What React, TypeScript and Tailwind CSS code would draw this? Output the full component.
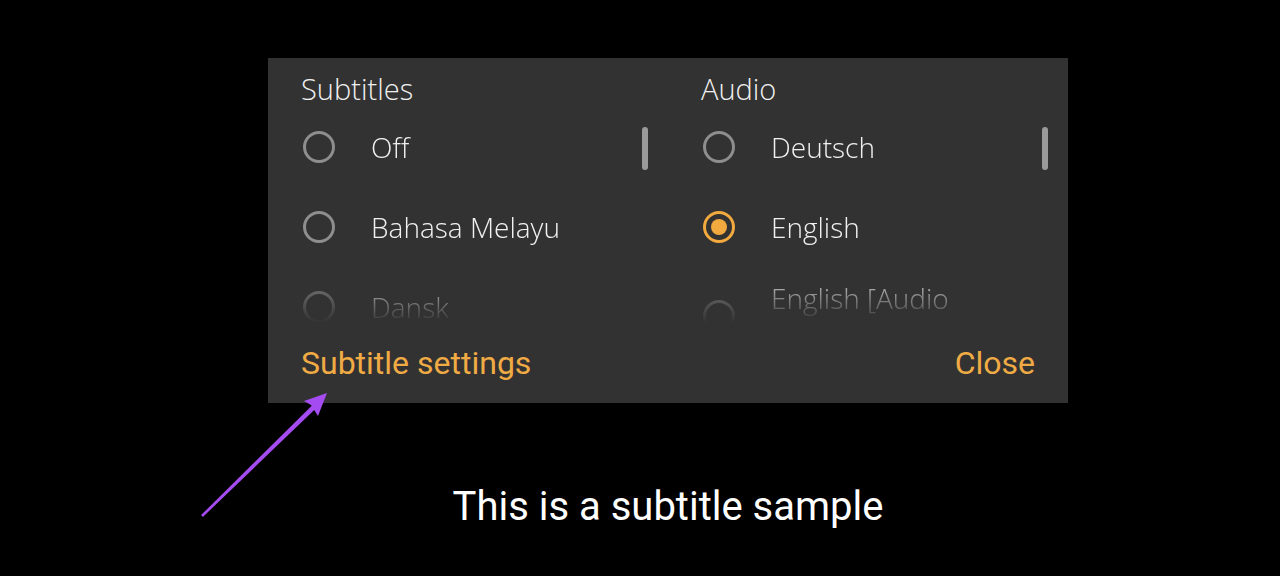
import React from 'react';

type Item = { label: string; selected?: boolean; wrap?: boolean };

const subtitles: Item[] = [{ label: 'Off' }, { label: 'Bahasa Melayu' }, { label: 'Dansk' }];
const audio: Item[] = [{ label: 'Deutsch' }, { label: 'English', selected: true }, { label: 'English [Audio Description]', wrap: true }];

const Radio: React.FC<{ selected?: boolean }> = ({ selected }) => (
    <svg width="36" height="36" viewBox="0 0 36 36" className="shrink-0">
        <circle cx="18" cy="18" r="14.5" fill="none" stroke={selected ? '#f2aa3e' : '#8e8e8e'} strokeWidth="3" />
        {selected && <circle cx="18" cy="18" r="8" fill="#f2aa3e" />}
    </svg>
);

const Column: React.FC<{ title: string; items: Item[] }> = ({ title, items }) => (
    <div className="relative w-[400px] pl-[33px] pr-[20px]">
        <div className="h-[36px] leading-[36px] text-[29px] font-light text-[#f0f0f0]">{title}</div>
        <div className="h-[216px] overflow-hidden [mask-image:linear-gradient(to_bottom,black_160px,transparent_216px)]">
            {items.map(item => (
                <div key={item.label} className={`flex items-center gap-[34px] ${item.wrap ? 'py-[13px]' : 'h-[80px]'}`}>
                    <Radio selected={item.selected} />
                    <div className="w-[280px] text-[28px] leading-[36px] font-light text-[#f0f0f0]">{item.label}</div>
                </div>
            ))}
        </div>
        <div className="absolute left-[374px] top-[56px] h-[43px] w-[6px] rounded-full bg-[#9a9a9a]" />
    </div>
);

export default function App() {
    return (
        <div className="relative w-[1280px] h-[576px] bg-black overflow-hidden" style={{ fontFamily: '"Open Sans", "Noto Sans", sans-serif' }}>
            <div className="pt-[58px] ml-[268px] w-[800px]">
                <div className="h-[345px] bg-[#323232] pt-[13px] flex flex-col">
                    <div className="flex">
                        <Column title="Subtitles" items={subtitles} />
                        <Column title="Audio" items={audio} />
                    </div>
                    <div className="flex-1 flex items-center justify-between px-[33px] text-[32px] text-[#f0ab45]" style={{ fontFamily: 'Roboto, sans-serif' }}>
                        <span>Subtitle settings</span>
                        <span>Close</span>
                    </div>
                </div>
                <div className="mt-[80px] text-center text-[40px] leading-[48px] text-white" style={{ fontFamily: 'Roboto, sans-serif' }}>
                    This is a subtitle sample
                </div>
            </div>

            <svg className="absolute inset-0 pointer-events-none" width="1280" height="576" viewBox="0 0 1280 576">
                <path d="M201.1 515.1 L316.3 401.2 L319.7 404.8 L202.9 516.9 Z" fill="#a44cf2" />
                <path d="M327 393 L304 401 L311 405 L318 416 Z" fill="#a44cf2" />
            </svg>
        </div>
    );
}
